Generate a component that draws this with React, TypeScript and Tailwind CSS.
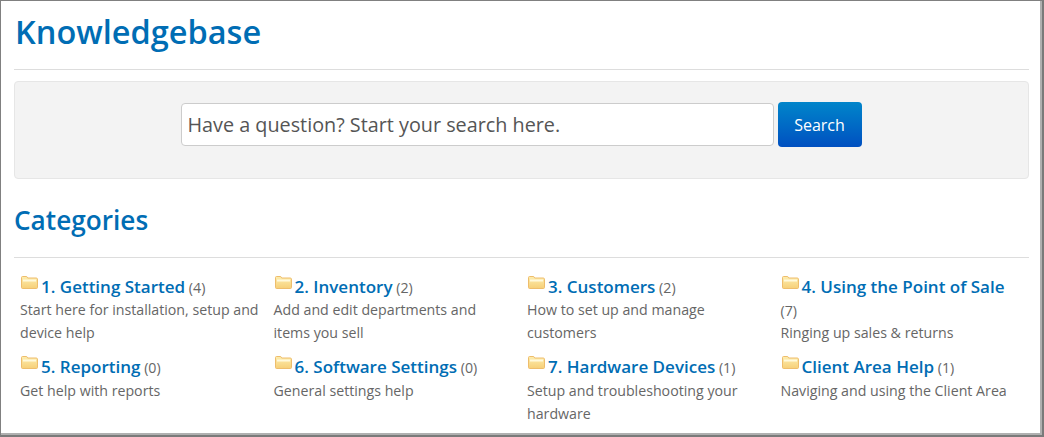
const CATEGORIES = [
  { name: "1. Getting Started", count: 4, desc: "Start here for installation, setup and device help" },
  { name: "2. Inventory", count: 2, desc: "Add and edit departments and items you sell" },
  { name: "3. Customers", count: 2, desc: "How to set up and manage customers" },
  { name: "4. Using the Point of Sale", count: 7, desc: "Ringing up sales & returns" },
  { name: "5. Reporting", count: 0, desc: "Get help with reports" },
  { name: "6. Software Settings", count: 0, desc: "General settings help" },
  { name: "7. Hardware Devices", count: 1, desc: "Setup and troubleshooting your hardware" },
  { name: "Client Area Help", count: 1, desc: "Naviging and using the Client Area" },
];

function FolderIcon() {
  return (
    <svg width="17" height="13" viewBox="0 0 17 13" className="inline-block align-[3px] ml-px mr-[3px]">
      <defs>
        <linearGradient id="folder" x1="0" y1="0" x2="0" y2="1">
          <stop offset="0" stopColor="#fdeeb0" />
          <stop offset="1" stopColor="#f6cf78" />
        </linearGradient>
      </defs>
      <path d="M.5 11.5V1.5c0-.6.4-1 1-1h4.2l1 1.5h8.6c.6 0 1.2.5 1.2 1.1v8.4c0 .6-.4 1-1 1h-14c-.6 0-1-.4-1-1Z" fill="url(#folder)" stroke="#eebd6c" />
      <rect x="2" y="3.5" width="13" height="2" fill="#fff9dc" />
    </svg>
  );
}

export default function App() {
  return (
    <div className="h-[437px] w-[1044px] overflow-hidden bg-white font-['Open_Sans',sans-serif] border-t border-l border-t-[#808080] border-l-[#808080] border-r-2 border-b-2 border-r-[#7a7a7a] border-b-[#7a7a7a]">
      <div className="h-full border-r-2 border-b-2 border-r-[#b0b0b0] border-b-[#b0b0b0] pl-[13px] pr-[11px]">
        <h1 className="pt-[10px] pb-[16px] pl-px text-[32.5px] leading-[42px] font-semibold text-[#006db4] border-b border-[#dddddd]">
          Knowledgebase
        </h1>

        <div className="mt-[11px] h-[98px] flex justify-center items-center gap-1 bg-[#f3f3f3] border border-[#e6e6e6] rounded pr-[1px] pb-[12px]">
          <div className="w-[593px] h-[43px] flex items-center px-[6px] pt-[2px] bg-white border border-[#cccccc] rounded text-[19.8px] text-[#555555]">
            Have a question? Start your search here.
          </div>
          <button className="w-[84px] h-[45px] pt-px rounded text-[16px] text-white bg-gradient-to-b from-[#0285ca] to-[#004fc0]">
            Search
          </button>
        </div>

        <h2 className="mt-[22px] pb-[17px] text-[26.2px] leading-[39px] font-semibold text-[#006db4] border-b border-[#dddddd]">
          Categories
        </h2>

        <div className="mt-[17px] pl-[6px] -mr-[5px] grid grid-cols-4 auto-rows-[80.4px]">
          {CATEGORIES.map((c) => (
            <div key={c.name} className="pr-[14px] text-[14.2px] leading-[23.2px] text-[#666666]">
              <div>
                <FolderIcon />
                <a className="text-[17px] leading-none align-[-1px] font-semibold text-[#006db4]">{c.name}</a>{" "}
                <span className="leading-none align-[-1px]">({c.count})</span>
              </div>
              <div>{c.desc}</div>
            </div>
          ))}
        </div>
      </div>
    </div>
  );
}
